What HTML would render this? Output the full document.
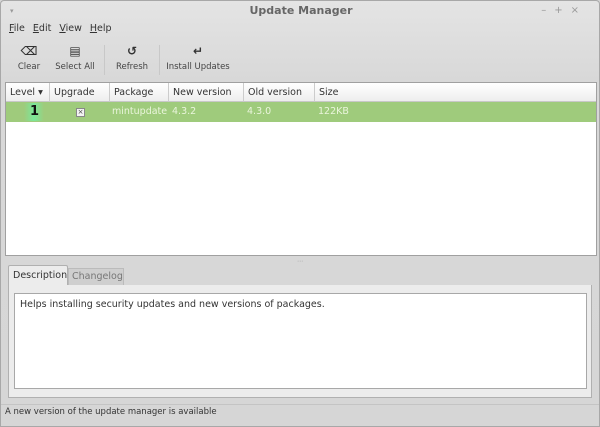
<!DOCTYPE html>
<html><head><style>
*{margin:0;padding:0;box-sizing:border-box}
body{width:600px;height:427px;overflow:hidden;font-family:"DejaVu Sans","Liberation Sans",sans-serif;font-size:9px;color:#333;background:#d6d6d6;position:relative}
.win{position:absolute;left:0;top:0;width:600px;height:427px;background:linear-gradient(#e4e4e4,#d8d8d8 80px,#d6d6d6);border:1px solid #a8a8a8;border-radius:4px 4px 0 0}
.abs{position:absolute}
.title{top:3px;left:0;width:600px;text-align:center;font-weight:bold;font-size:11px;color:#666}
.menu span{margin-right:8px;font-size:9.5px;color:#333}
.tb{top:43px;text-align:center;font-size:8.5px;color:#444}
.tb div{font-size:12px;height:18px;font-weight:bold;color:#333}
.list{left:4px;top:81px;width:592px;height:174px;background:#fff;border:1px solid #a0a0a0}
.hdr{position:absolute;top:0;height:19px;border-right:1px solid #ccc;border-bottom:1px solid #c8c8c8;background:linear-gradient(#fff,#eee);padding:4px 0 0 4px;font-size:9.5px;color:#333}
.row{position:absolute;top:19px;left:0;width:590px;height:20px;background:#9fcb7c;color:#eaf5dc;font-size:9.5px}
.row span{position:absolute;top:4px}
</style></head><body>
<div class="win">
<div class="abs" style="left:9px;top:6px;font-size:7px;color:#999">▾</div>
<div class="abs title">Update Manager</div>
<div class="abs" style="right:12px;top:4px;color:#999;font-size:10px;letter-spacing:8px">–+×</div>
<div class="abs menu" style="left:8px;top:22px"><span><u>F</u>ile</span><span><u>E</u>dit</span><span><u>V</u>iew</span><span><u>H</u>elp</span></div>
<div class="abs tb" style="left:9px;width:38px"><div>⌫</div>Clear</div>
<div class="abs tb" style="left:53px;width:42px"><div>▤</div>Select All</div>
<div class="abs" style="left:103px;top:44px;width:1px;height:30px;background:#c8c8c8"></div>
<div class="abs tb" style="left:111px;width:40px"><div>↺</div>Refresh</div>
<div class="abs" style="left:158px;top:44px;width:1px;height:30px;background:#c8c8c8"></div>
<div class="abs tb" style="left:164px;width:66px"><div>↵</div>Install Updates</div>
<div class="abs list">
<div class="hdr" style="left:0;width:44px">Level ▾</div>
<div class="hdr" style="left:44px;width:60px">Upgrade</div>
<div class="hdr" style="left:104px;width:59px">Package</div>
<div class="hdr" style="left:163px;width:75px">New version</div>
<div class="hdr" style="left:238px;width:71px">Old version</div>
<div class="hdr" style="left:309px;width:281px;border-right:none">Size</div>
<div class="row">
<div class="abs" style="left:18px;top:1px;width:20px;height:18px;background:linear-gradient(90deg,#9fcb7c,#7ae89a,#9fcb7c)"></div>
<span style="left:24px;top:2px;color:#111;font-weight:bold;font-size:13px">1</span>
<div class="abs" style="left:70px;top:6px;width:9px;height:9px;border:1px solid #888;background:#f4f4f4;font-size:7px;line-height:7px;text-align:center;color:#444">×</div>
<span style="left:106px">mintupdate</span><span style="left:166px">4.3.2</span><span style="left:241px">4.3.0</span><span style="left:312px">122KB</span>
</div>
</div>
<div class="abs" style="left:296px;top:257px;font-size:6px;color:#999">⋯</div>
<div class="abs" style="left:7px;top:264px;width:60px;height:21px;background:#ececec;border:1px solid #b0b0b0;border-bottom:none;border-radius:2px 2px 0 0;padding:4px 0 0 4px;font-size:9.5px">Description</div>
<div class="abs" style="left:67px;top:267px;width:56px;height:17px;background:#cfcfcf;border:1px solid #bbb;border-bottom:none;padding:2px 0 0 3px;font-size:9.5px;color:#777">Changelog</div>
<div class="abs" style="left:7px;top:284px;width:584px;height:113px;background:#ececec;border:1px solid #b0b0b0;border-top:none"></div>
<div class="abs" style="left:13px;top:292px;width:573px;height:96px;background:#fff;border:1px solid #a8a8a8;padding:5px 0 0 5px;font-size:9.5px">Helps installing security updates and new versions of packages.</div>
<div class="abs" style="left:0;top:403px;width:598px;height:1px;background:#c4c4c4"></div>
<div class="abs" style="left:4px;top:406px;font-size:8.5px;color:#333">A new version of the update manager is available</div>
</div>
</body></html>
